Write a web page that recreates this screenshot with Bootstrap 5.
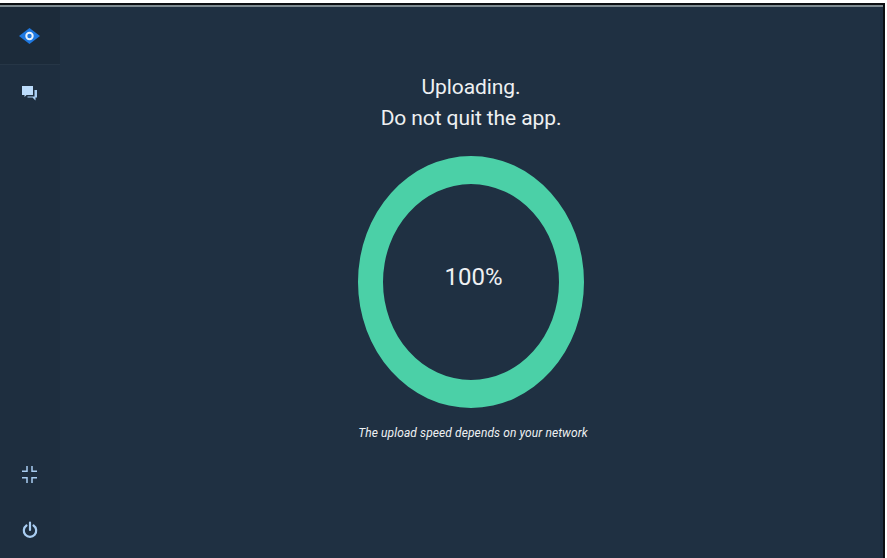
<!DOCTYPE html>
<html lang="en">
<head>
    <meta charset="UTF-8">
    <title>Uploading</title>
    <link href="https://cdn.jsdelivr.net/npm/bootstrap@5.3.0/dist/css/bootstrap.min.css" rel="stylesheet">
    <style>
        html, body { height: 558px; overflow: hidden; background: #fff; }
        body { font-family: Roboto, "Liberation Sans", sans-serif; padding-top: 3px; padding-right: 2px; }
        .app-frame { height: 555px; border-top: 2px solid #0c0f12; border-right: 2px solid #0c0f12; background: #1f3042; color: #eef0f2; }
        .app-frame-shine { height: 2px; background: #7d8a90; }
        .side-rail { width: 60px; background: #1e2e3f; padding-right: 1px; }
        .rail-top { height: 58px; margin-right: -1px; padding-right: 1px; background: #1c2b3a; border-bottom: 1px solid #263646; }
        .rail-item { height: 56px; }
        .upload-title { font-size: 21px; line-height: 31px; letter-spacing: -0.1px; margin: 65px 0 22px; padding-right: 1px; }
        .upload-ring { width: 226px; height: 252px; border-style: solid; border-color: #4bd0a7; border-width: 28px 25px; border-radius: 50%; margin-left: -2px; }
        .upload-pct { font-size: 24px; padding-left: 6px; padding-bottom: 10px; }
        .upload-note { font-size: 12px; font-style: italic; letter-spacing: 0.1px; margin-top: 16px; padding-left: 3px; }
    </style>
</head>
<body>

<div class="app-frame d-flex flex-column">
    <div class="app-frame-shine"></div>
    <div class="d-flex flex-grow-1">

        <!-- Side rail -->
        <div class="side-rail d-flex flex-column">
            <div class="rail-top d-flex align-items-center justify-content-center">
                <svg width="21" height="16" viewBox="0 0 21 16">
                    <path d="M0 8 10.500 0 21 8 10.500 16Z" fill="#1e78e0"/>
                    <circle cx="10.500" cy="8" r="3.200" fill="none" stroke="#e8f2fc" stroke-width="2"/>
                </svg>
            </div>
            <div class="rail-item d-flex align-items-center justify-content-center">
                <svg width="15" height="16" viewBox="0 0 15 16">
                    <path d="M12.500 5H15V12.500H13.500V15.500L10.500 12.500H5.500V11.500H12.500Z" fill="#a9cdf2"/>
                    <path d="M0 1H11V10H4.500L2.500 12V10H0Z" fill="#bcdcfb"/>
                </svg>
            </div>
            <div class="mt-auto rail-item d-flex align-items-center justify-content-center">
                <svg width="15" height="17" viewBox="0 0 15 17" fill="none" stroke="#a9cdf2" stroke-width="1.500">
                    <path d="M0 5.200H5V0M15 5.200H10V0M0 11.800H5V17M15 11.800H10V17"/>
                </svg>
            </div>
            <div class="rail-item d-flex align-items-center justify-content-center">
                <svg width="16" height="18" viewBox="0 0 16 18" fill="none" stroke="#a9cdf2" stroke-width="2.200">
                    <path d="M4.500 4.500A6.200 6.200 0 1 0 11.500 4.500M8 1.500V9" stroke-linecap="round"/>
                </svg>
            </div>
        </div>

        <!-- Upload progress -->
        <div class="flex-grow-1 d-flex flex-column align-items-center">
            <div class="upload-title text-center">Uploading.<br>Do not quit the app.</div>
            <div class="upload-ring d-flex align-items-center justify-content-center">
                <span class="upload-pct">100%</span>
            </div>
            <div class="upload-note">The upload speed depends on your network</div>
        </div>

    </div>
</div>

<script src="https://cdn.jsdelivr.net/npm/bootstrap@5.3.0/dist/js/bootstrap.bundle.min.js"></script>
</body>
</html>
